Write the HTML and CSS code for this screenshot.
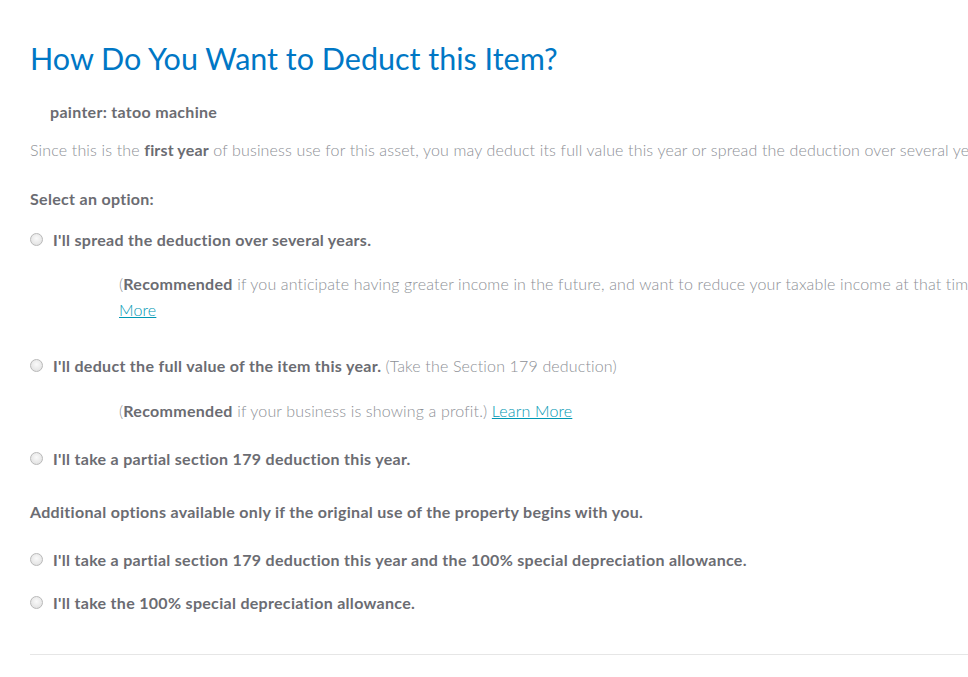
FILE: index.html
```html
<!DOCTYPE html>
<html>
<head>
    <title>Deduct Item</title>
    <link rel="stylesheet" href="styles.css">
</head>
    <body>
        <div class="page">
            <h1>How Do You Want to Deduct this Item?</h1>
            <p class="asset-name">painter: tatoo machine</p>
            <p class="intro">Since this is the <b>first year</b> of business use for this asset, you may deduct its full value this year or spread the deduction over several years.</p>

            <p class="section-label">Select an option:</p>

            <label class="option">
                <input type="radio" name="deduct">
                <span class="radio"></span>
                <span class="option-text">I'll spread the deduction over several years.</span>
            </label>
            <p class="note note-long">(<b>Recommended</b> if you anticipate having greater income in the future, and want to reduce your taxable income at that time.) <a href="#">Learn<br>More</a></p>

            <label class="option">
                <input type="radio" name="deduct">
                <span class="radio"></span>
                <span class="option-text">I'll deduct the full value of the item this year.</span>
                <span class="option-sub">(Take the Section 179 deduction)</span>
            </label>
            <p class="note note-short">(<b>Recommended</b> if your business is showing a profit.) <a href="#">Learn More</a></p>

            <label class="option option-last">
                <input type="radio" name="deduct">
                <span class="radio"></span>
                <span class="option-text">I'll take a partial section 179 deduction this year.</span>
            </label>

            <p class="section-label extra">Additional options available only if the original use of the property begins with you.</p>

            <label class="option">
                <input type="radio" name="deduct">
                <span class="radio"></span>
                <span class="option-text">I'll take a partial section 179 deduction this year and the 100% special depreciation allowance.</span>
            </label>

            <label class="option">
                <input type="radio" name="deduct">
                <span class="radio"></span>
                <span class="option-text">I'll take the 100% special depreciation allowance.</span>
            </label>

            <hr class="divider">
        </div>
    </body>
</html>
```

FILE: styles.css
```css
html, body {
    overflow: hidden;
}
body {
    margin: 0;
    font-family: Lato, "Open Sans", sans-serif;
    color: #6b6c72;
    background: #fff;
}
p {
    margin: 0;
}
.page {
    width: 1040px;
    padding: 38px 0 0 30px;
}
h1 {
    margin: 0 0 22px;
    font-size: 30.5px;
    line-height: 40px;
    font-weight: 400;
    color: #0077c5;
}
.asset-name {
    margin: 0 0 14px 20px;
    font-size: 16px;
    line-height: 24px;
    font-weight: 700;
    letter-spacing: 0.3px;
}
.intro {
    margin-bottom: 25px;
    font-size: 16px;
    line-height: 24px;
    font-weight: 300;
    letter-spacing: 0.15px;
    color: #8d9096;
    white-space: nowrap;
}
.intro b {
    font-weight: 700;
    color: #6b6c72;
}
.section-label {
    margin-bottom: 16px;
    font-size: 16px;
    line-height: 24px;
    font-weight: 700;
    letter-spacing: 0.3px;
}
.section-label.extra {
    margin-top: 30px;
    margin-bottom: 23px;
}
.option {
    display: flex;
    align-items: center;
    gap: 10px;
    height: 24px;
    margin-bottom: 19px;
    font-size: 16px;
    letter-spacing: 0.3px;
    cursor: pointer;
}
.option-last {
    margin-bottom: 0;
}
.option input {
    display: none;
}
.radio {
    flex: none;
    width: 11px;
    height: 11px;
    border: 1px solid #b9b9b9;
    border-radius: 50%;
    background: radial-gradient(circle at 50% 40%, #fafafa, #dcdcdc);
}
.option-text {
    font-weight: 700;
}
.option-sub {
    margin-left: -6px;
    font-weight: 300;
    letter-spacing: 0.15px;
    color: #8d9096;
}
.note {
    margin: 20px 0 22px 89px;
    font-size: 16px;
    line-height: 26px;
    font-weight: 300;
    letter-spacing: 0.15px;
    color: #8d9096;
}
.note-long {
    margin-bottom: 30px;
    white-space: nowrap;
}
.note-short {
    margin-top: 21px;
}
.note b {
    font-weight: 700;
    letter-spacing: 0.3px;
    color: #6b6c72;
}
.note a {
    color: #0097b3;
}
.divider {
    margin: 40px 0 0;
    border: 0;
    border-top: 1px solid #e6e6e6;
}
```
